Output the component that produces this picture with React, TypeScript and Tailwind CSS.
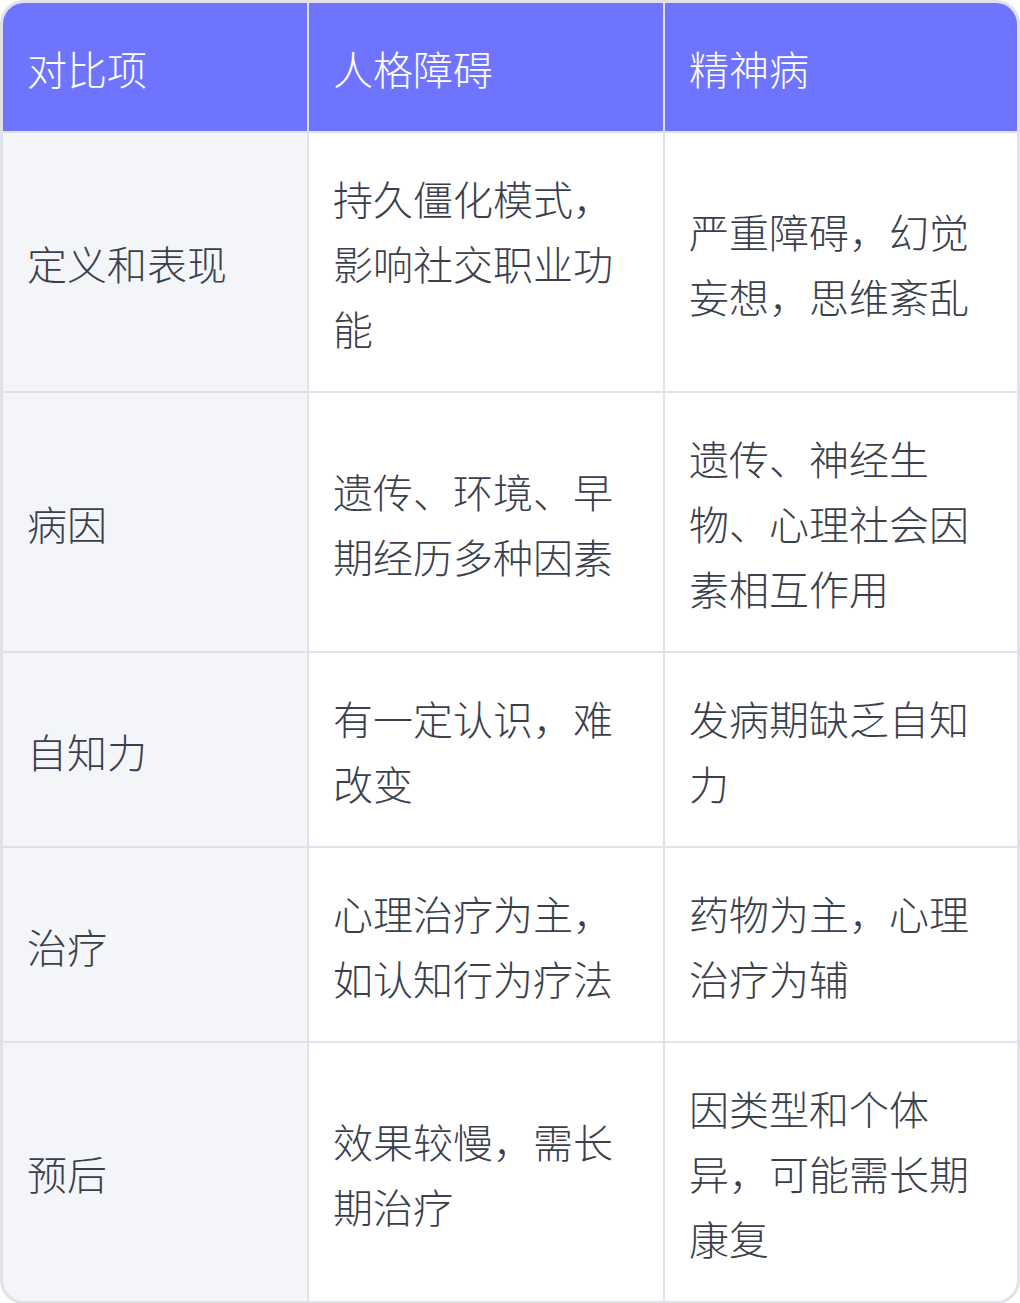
const HEAD = ['对比项', '人格障碍', '精神病']

const ROWS: string[][] = [
  ['定义和表现', '持久僵化模式，影响社交职业功能', '严重障碍，幻觉妄想，思维紊乱'],
  ['病因', '遗传、环境、早期经历多种因素', '遗传、神经生物、心理社会因素相互作用'],
  ['自知力', '有一定认识，难改变', '发病期缺乏自知力'],
  ['治疗', '心理治疗为主，如认知行为疗法', '药物为主，心理治疗为辅'],
  ['预后', '效果较慢，需长期治疗', '因类型和个体异，可能需长期康复'],
]

export default function App() {
  return (
    <div className="w-[1020px] h-[1303px] bg-white font-['Noto_Sans_CJK_SC',sans-serif] font-light">
      <div className="border-[3px] border-[#e1e2e8] rounded-[24px] overflow-hidden">
        <div className="grid grid-cols-[304px_354px_352px] gap-[2px] bg-[#e1e2e8]">
          {HEAD.map(h => (
            <div
              key={h}
              className="bg-[#6f74ff] text-white text-[40px] leading-[65px] px-6 pt-[33px] pb-[30px] flex items-center"
            >
              {h}
            </div>
          ))}
          {ROWS.map(row =>
            row.map((cell, i) => (
              <div
                key={row[0] + i}
                className={
                  'text-[#3b3f4c] text-[40px] leading-[65px] px-6 pt-[33px] pb-[30px] flex items-center ' +
                  (i === 0 ? 'bg-[#f4f5f9]' : 'bg-white')
                }
              >
                <span className="block w-full">{cell}</span>
              </div>
            ))
          )}
        </div>
      </div>
    </div>
  )
}
